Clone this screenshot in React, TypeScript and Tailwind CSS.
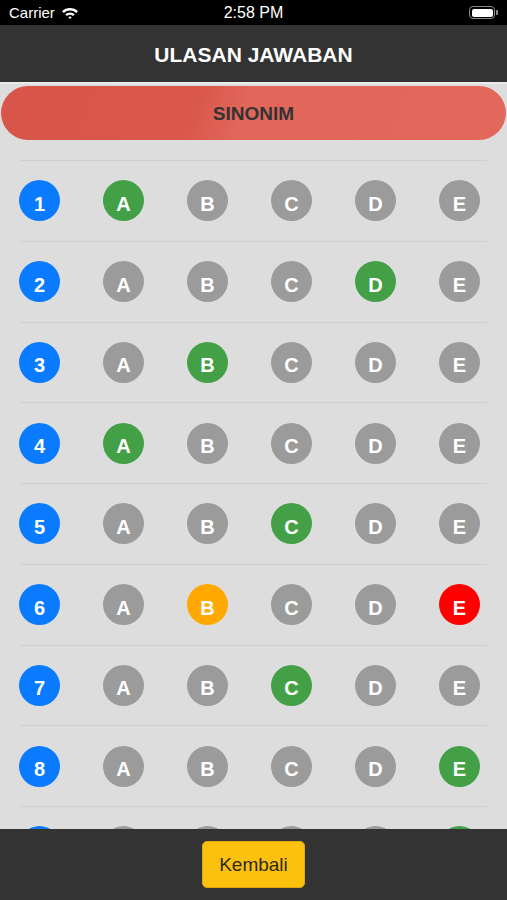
import React from "react";

type Mark = "none" | "green" | "orange" | "red";

const rows: { n: number; marks: Record<string, Mark> }[] = [
  { n: 1, marks: { A: "green" } },
  { n: 2, marks: { D: "green" } },
  { n: 3, marks: { B: "green" } },
  { n: 4, marks: { A: "green" } },
  { n: 5, marks: { C: "green" } },
  { n: 6, marks: { B: "orange", E: "red" } },
  { n: 7, marks: { C: "green" } },
  { n: 8, marks: { E: "green" } },
  { n: 9, marks: { E: "green" } },
];

const letters = ["A", "B", "C", "D", "E"];

function colorClass(m: Mark | undefined) {
  if (m === "green") return "bg-[#43a047]";
  if (m === "orange") return "bg-[#ffa800]";
  if (m === "red") return "bg-[#ff0000]";
  return "bg-[#9b9b9b]";
}

function Circle({ label, cls }: { label: string; cls: string }) {
  return (
    <div
      className={`w-[41px] h-[41px] rounded-full flex items-center justify-center text-white font-bold text-[20px] leading-none ${cls}`}
    >
      <span className="translate-y-[3px]">{label}</span>
    </div>
  );
}

export default function App() {
  return (
    <div
      className="w-[507px] h-[900px] flex flex-col overflow-hidden bg-[#dddddd]"
      style={{ fontFamily: '"Liberation Sans", Arial, sans-serif' }}
    >
      {/* status bar */}
      <div className="h-[25px] bg-black text-white flex items-center relative px-[9px] shrink-0">
        <div className="flex items-center gap-[6px]">
          <span className="text-[15px] leading-none">Carrier</span>
          <svg width="18" height="14" viewBox="0 0 18 14">
            <path d="M1 5.2 A11.5 11.5 0 0 1 17 5.2 L15.2 7 A9 9 0 0 0 2.8 7 Z" fill="white" />
            <path d="M4.2 8.3 A7 7 0 0 1 13.8 8.3 L12 10.1 A4.5 4.5 0 0 0 6 10.1 Z" fill="white" />
            <path d="M7.3 11.3 A2.5 2.5 0 0 1 10.7 11.3 L9 13 Z" fill="white" />
          </svg>
        </div>
        <div className="absolute left-0 right-0 text-center text-[16px] leading-none pointer-events-none">
          2:58 PM
        </div>
        <div className="ml-auto flex items-center">
          <div className="w-[26px] h-[13px] rounded-[4px] border border-[#8a8a8a] p-[1.5px]">
            <div className="w-full h-full rounded-[2px] bg-white" />
          </div>
          <div className="w-[2px] h-[5px] bg-[#8a8a8a] rounded-r-[1px] ml-[1px]" />
        </div>
      </div>

      {/* header */}
      <div className="h-[57px] bg-[#333333] flex items-center justify-center shrink-0">
        <span className="text-white font-bold text-[21px] leading-none translate-y-[1px]">ULASAN JAWABAN</span>
      </div>

      {/* content */}
      <div className="flex-1 overflow-hidden border-t-2 border-[#ececec] pt-[2px]">
        <div className="mx-[1px] h-[54px] rounded-full bg-[linear-gradient(110deg,#d8554a_0%,#d9574b_38%,#e2665a_48%,#e3685c_100%)] flex items-center justify-center">
          <span className="text-[#333333] font-bold text-[19px] leading-none">SINONIM</span>
        </div>
        <div className="mt-[20px]">
          {rows.map((r) => (
            <div key={r.n} className="mx-[20px] border-t border-[#cfcfcf] h-[80.75px] flex items-center">
              <div className="flex-1 flex justify-between items-center ml-[-1px] mr-[7px]">
                <Circle label={String(r.n)} cls="bg-[#0a7bff]" />
                {letters.map((l) => (
                  <Circle key={l} label={l} cls={colorClass(r.marks[l])} />
                ))}
              </div>
            </div>
          ))}
        </div>
      </div>

      {/* bottom bar */}
      <div className="h-[71px] bg-[#333333] shrink-0 flex justify-center pt-[12px]">
        <button className="w-[103px] h-[47px] rounded-[5px] bg-[#fcc10f] border border-[#e0a90a] text-[#2e2a1e] text-[19px] leading-none flex items-center justify-center">
          Kembali
        </button>
      </div>
    </div>
  );
}
